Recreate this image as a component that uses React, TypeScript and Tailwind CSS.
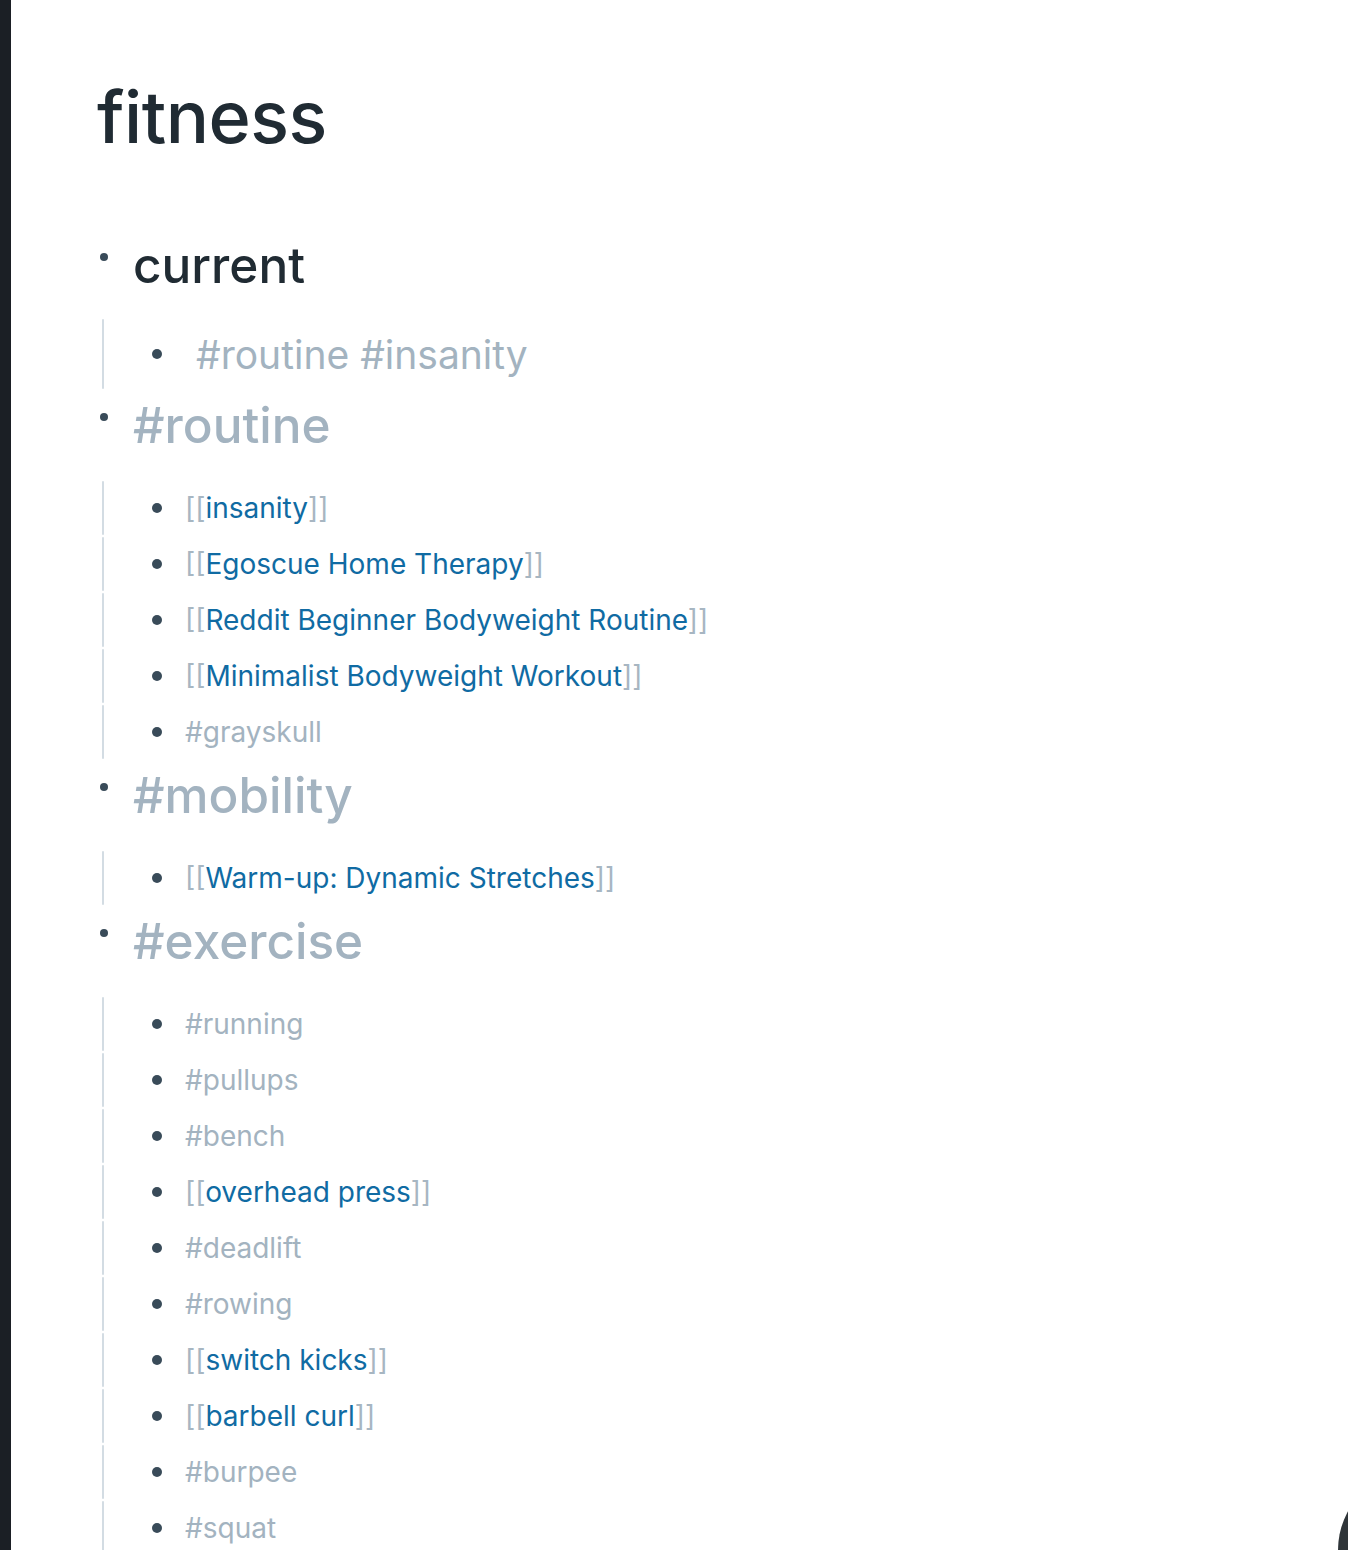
import React from 'react';

type Part = { kind: 'tag' | 'link' | 'text'; text: string };

interface Child {
  parts: Part[];
  big?: boolean;
}

interface Section {
  title: Part;
  children: Child[];
}

const tag = (text: string): Part => ({ kind: 'tag', text });
const link = (text: string): Part => ({ kind: 'link', text });

const sections: Section[] = [
  { title: { kind: 'text', text: 'current' }, children: [{ parts: [tag('#routine'), { kind: 'text', text: ' ' }, tag('#insanity')], big: true }] },
  {
    title: tag('#routine'),
    children: [
      { parts: [link('insanity')] },
      { parts: [link('Egoscue Home Therapy')] },
      { parts: [link('Reddit Beginner Bodyweight Routine')] },
      { parts: [link('Minimalist Bodyweight Workout')] },
      { parts: [tag('#grayskull')] },
    ],
  },
  { title: tag('#mobility'), children: [{ parts: [link('Warm-up: Dynamic Stretches')] }] },
  {
    title: tag('#exercise'),
    children: [
      { parts: [tag('#running')] },
      { parts: [tag('#pullups')] },
      { parts: [tag('#bench')] },
      { parts: [link('overhead press')] },
      { parts: [tag('#deadlift')] },
      { parts: [tag('#rowing')] },
      { parts: [link('switch kicks')] },
      { parts: [link('barbell curl')] },
      { parts: [tag('#burpee')] },
      { parts: [tag('#squat')] },
    ],
  },
];

const Inline: React.FC<{ part: Part }> = ({ part }) => {
  if (part.kind === 'link') {
    return (
      <span>
        <span className="text-[#a7b6c2]">[[</span>
        <span className="text-[#106ba3]">{part.text}</span>
        <span className="text-[#a7b6c2]">]]</span>
      </span>
    );
  }
  if (part.kind === 'tag') return <span className="text-[#a3b3c0]">{part.text}</span>;
  return <span>{part.text}</span>;
};

const ChildRow: React.FC<{ child: Child }> = ({ child }) => (
  <div className={`flex items-stretch ${child.big ? 'h-[72px]' : 'h-[56px]'}`}>
    <div className="w-[2px] my-[1px] rounded-full bg-[#d3dce3]" />
    <div className="flex items-center">
      <div className="w-[58px] flex justify-end">
        <div className="w-[10px] h-[10px] rounded-full bg-[#394b59]" />
      </div>
      <div className={child.big ? 'pl-[34px] text-[39px] leading-none' : 'pl-[23px] text-[28px] leading-none'}>
        {child.parts.map((p, i) => (
          <Inline key={i} part={p} />
        ))}
      </div>
    </div>
  </div>
);

export default function App() {
  return (
    <div className="min-h-screen flex bg-white text-[#202b33]" style={{ fontFamily: 'Inter, "Noto Sans", sans-serif' }}>
      <div className="w-[11px] shrink-0 bg-[#1b1f25]" />
      <main className="flex-1 pl-[86px] pt-[72px]">
        <h1 className="text-[72px] leading-[90px] font-medium tracking-[-0.5px]">fitness</h1>
        <div className="mt-[68px]">
          {sections.map((s, i) => (
            <div key={i}>
              <div className="flex items-start h-[70px] pt-[6px]">
                <div className="w-[36px] pt-[17px] pl-[3px]">
                  <div className="w-[8px] h-[8px] rounded-full bg-[#394b59]" />
                </div>
                <div className="text-[49.5px] leading-[58px] font-medium">
                  <Inline part={s.title} />
                </div>
              </div>
              <div className={`pl-[5px] ${i === 0 ? 'mt-[18px]' : 'mt-[20px]'}`}>
                {s.children.map((c, j) => (
                  <ChildRow key={j} child={c} />
                ))}
              </div>
            </div>
          ))}
        </div>
      </main>
      <div className="fixed left-[1338px] top-[1470px] w-[160px] h-[160px] rounded-full bg-[#2f3539]" />
    </div>
  );
}
